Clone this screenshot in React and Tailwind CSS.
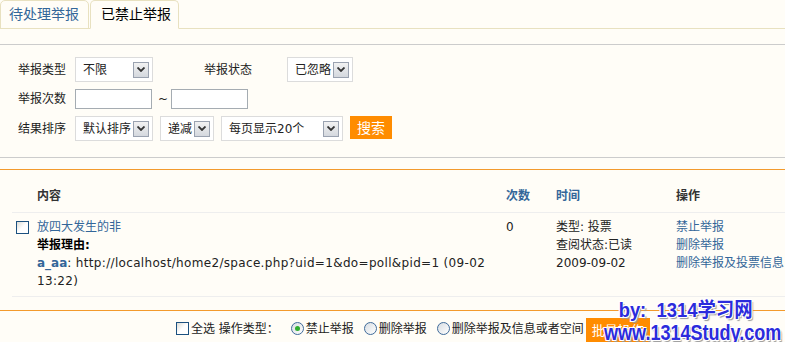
import React from 'react'

const font = 'font-["DejaVu_Sans","Noto_Sans_CJK_SC",sans-serif]'

function Select({ label, width }) {
  return (
    <div className={`flex items-center justify-between h-[25px] border border-[#dcdcdc] bg-white pl-[7px] pr-[3px] ${width}`}>
      <span className="text-[12px] leading-none text-[#222]">{label}</span>
      <span className="w-[16px] h-[16px] border border-[#9aa2b0] bg-gradient-to-b from-[#f2f2f2] to-[#d4d8de] flex items-center justify-center">
        <svg width="8" height="5" viewBox="0 0 8 5">
          <path d="M0.5 0.5 L4 4 L7.5 0.5" fill="none" stroke="#333" strokeWidth="1.8" />
        </svg>
      </span>
    </div>
  )
}

function Checkbox() {
  return (
    <span className="inline-block w-[13px] h-[13px] border border-[#1c5180] bg-gradient-to-br from-[#dcdcd6] via-white to-white" />
  )
}

function Radio({ checked }) {
  return (
    <span className="inline-flex items-center justify-center w-[13px] h-[13px] rounded-full border border-[#3f6b9a] bg-gradient-to-br from-[#d8dde2] to-white">
      {checked && <span className="w-[5px] h-[5px] rounded-full bg-[#2fae2f]" />}
    </span>
  )
}

export default function App() {
  return (
    <div className={`relative w-[785px] h-[342px] overflow-hidden bg-[#fffdf7] text-[12px] text-[#222] ${font}`}>
      {/* Tabs */}
      <div className="flex h-[29px] border-b border-[#e8e1c0]">
        <div className="w-[89px] -mb-px border border-[#e8e1c0] rounded-t-[5px] flex items-center pl-[8px] text-[14px] text-[#336699]">
          待处理举报
        </div>
        <div className="w-[89px] ml-[1px] -mb-px border border-[#e8e1c0] border-b-[#fffdf7] rounded-t-[5px] flex items-center pl-[10px] text-[14px] text-black">
          已禁止举报
        </div>
      </div>

      {/* Search form */}
      <div className="mt-[15px] border-t border-b border-[#cccccc] h-[114px] pt-[12px] pl-[18px] flex flex-col gap-[9px]">
        <div className="flex items-center">
          <span className="w-[57px]">举报类型</span>
          <div className="w-[129px]"><Select label="不限" width="w-[78px]" /></div>
          <span className="w-[83px]">举报状态</span>
          <Select label="已忽略" width="w-[66px]" />
        </div>
        <div className="flex items-center h-[20px] -my-[2px]">
          <span className="w-[57px]">举报次数</span>
          <input className="w-[77px] h-[20px] border border-[#a5acb2] bg-white" />
          <span className="w-[19px] pl-[6px]">~</span>
          <input className="w-[77px] h-[20px] border border-[#a5acb2] bg-white" />
        </div>
        <div className="flex items-center gap-[7px]">
          <span className="w-[50px]">结果排序</span>
          <Select label="默认排序" width="w-[78px]" />
          <Select label="递减" width="w-[54px]" />
          <Select label="每页显示20个" width="w-[122px]" />
          <button className="w-[42px] h-[23px] bg-[#ff8c00] text-white text-[14px] leading-none -mt-[2px]">搜索</button>
        </div>
      </div>

      {/* Table */}
      <div className="mt-[11px] border-t border-[#f39a2c]">
        <div className="ml-[12px] flex border-b border-[#eeeeee] pt-[17px] pb-[7px] leading-[18px] font-bold">
          <span className="w-[25px]" />
          <span className="w-[469px] text-[#333]">内容</span>
          <span className="w-[50px] text-[#336699]">次数</span>
          <span className="w-[120px] text-[#336699]">时间</span>
          <span className="text-[#333]">操作</span>
        </div>
        <div className="ml-[12px] flex border-b border-[#eeeeee] pt-[5px] pb-[6px] leading-[18px]">
          <span className="w-[25px] pl-[4px] pt-[3px]"><Checkbox /></span>
          <div className="w-[469px] pr-[8px]">
            <div className="text-[#336699]">放四大发生的非</div>
            <div className="font-bold text-black">举报理由:</div>
            <div className="tracking-[0.33px]">
              <span className="font-bold text-[#336699] tracking-normal">a_aa</span>: http://localhost/home2/space.php?uid=1&amp;do=poll&amp;pid=1 (09-02 13:22)
            </div>
          </div>
          <span className="w-[50px]">0</span>
          <div className="w-[120px]">
            <div>类型: 投票</div>
            <div>查阅状态:已读</div>
            <div>2009-09-02</div>
          </div>
          <div className="text-[#336699]">
            <div>禁止举报</div>
            <div>删除举报</div>
            <div>删除举报及投票信息</div>
          </div>
        </div>

        {/* Batch bar */}
        <div className="mt-[13px] border-t border-[#f39a2c] pt-[4px] pl-[176px] flex items-center h-[32px]">
          <Checkbox />
          <span className="ml-[2px]">全选 操作类型：</span>
          <span className="ml-[12px] flex items-center gap-[2px]"><Radio checked />禁止举报</span>
          <span className="ml-[10px] flex items-center gap-[2px]"><Radio />删除举报</span>
          <span className="ml-[10px] flex items-center gap-[2px]"><Radio />删除举报及信息或者空间</span>
          <button className="ml-[2px] mt-[4px] w-[64px] h-[26px] bg-[#ff8c00] text-white text-[13px] leading-none">批量操作</button>
        </div>
      </div>

      {/* Watermark */}
      <div className="absolute right-[4px] bottom-[-2px] flex flex-col items-end font-bold text-[#2b2bdc] font-['Liberation_Sans','Noto_Sans_CJK_SC',sans-serif] leading-none [text-shadow:1px_1px_0_#fff,-1px_-1px_0_#fff,1px_-1px_0_#fff,-1px_1px_0_#fff,2px_2px_1px_#999]">
        <div className="text-[20px] mr-[28px] mb-[2px] scale-x-[0.92] origin-right">by:&nbsp; 1314学习网</div>
        <div className="text-[22px] scale-x-[0.82] origin-right">www.1314Study.com</div>
      </div>
    </div>
  )
}
